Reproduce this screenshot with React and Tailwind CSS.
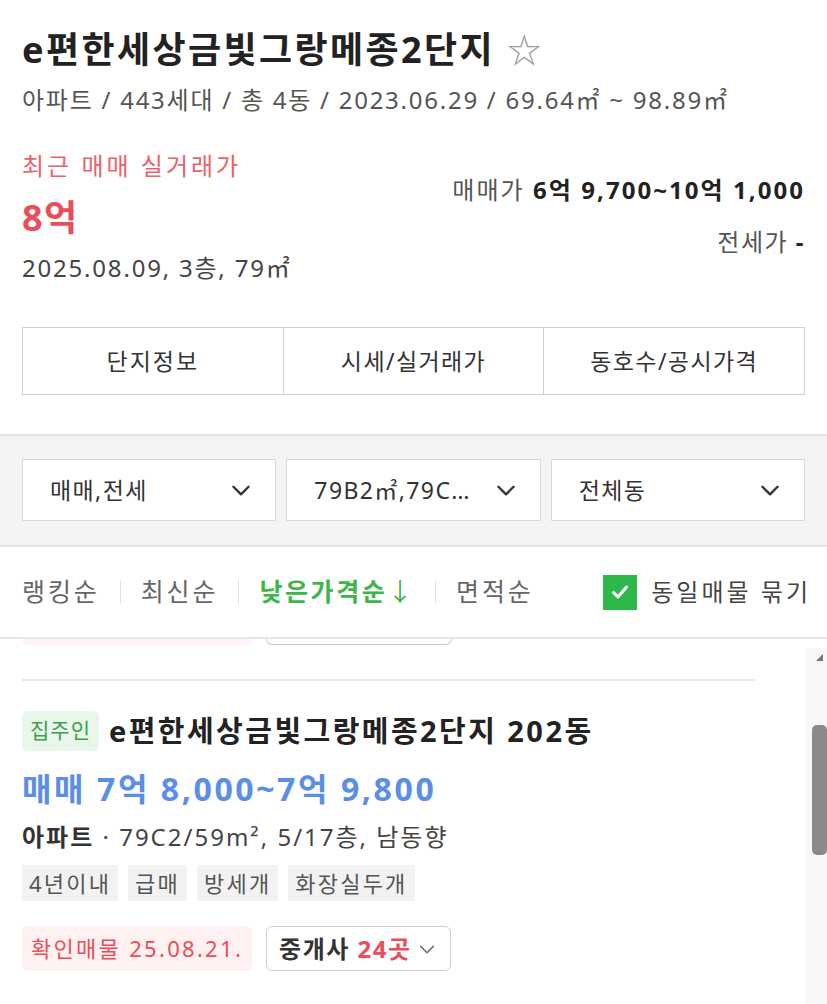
import React from "react";

const F = { fontFamily: '"Noto Sans","Noto Sans CJK KR",sans-serif' };

function Chevron({ className = "", sw = 2 }) {
  return (
    <svg viewBox="0 0 24 24" className={className} fill="none" stroke="currentColor" strokeWidth={sw} strokeLinecap="round" strokeLinejoin="round">
      <path d="M5 9l7 7 7-7" />
    </svg>
  );
}

function Dropdown({ label }) {
  return (
    <div className="flex-1 h-[62px] bg-white border border-[#d9d9d9] flex items-center justify-between pl-[27px] pr-[21px]">
      <span className="text-[23px] text-[#333] tracking-[1.4px] whitespace-nowrap overflow-hidden">{label}</span>
      <Chevron className="w-[26px] h-[26px] text-[#333] shrink-0" sw={2.2} />
    </div>
  );
}

function Sep() {
  return <span className="w-px h-[24px] bg-[#e0e0e0] mx-[20px]" />;
}

export default function App() {
  return (
    <div style={F} className="w-[827px] h-[1004px] bg-white overflow-hidden relative">
      {/* Header */}
      <div className="px-[22px] pt-[26px]">
        <div className="flex items-center h-[48px]">
          <h1 className="text-[36px] font-bold text-[#222] tracking-[2.4px] leading-none">e편한세상금빛그랑메종2단지</h1>
          <span className="ml-[12px] text-[34px] text-[#999] leading-none">☆</span>
        </div>
        <div className="mt-[11px] text-[24px] text-[#555] tracking-[1.75px] leading-[30px] whitespace-nowrap">
          아파트 / 443세대 / 총 4동 / 2023.06.29 / 69.64㎡ ~ 98.89㎡
        </div>

        <div className="flex justify-between mt-[36px]">
          <div>
            <div className="text-[24px] text-[#e9626b] tracking-[3px] leading-[30px]">최근 매매 실거래가</div>
            <div className="text-[36px] font-bold text-[#ea4d57] leading-[44px] mt-[15px] tracking-[1.5px]">8억</div>
            <div className="text-[24px] text-[#444] tracking-[1.8px] leading-[30px] mt-[13px] whitespace-nowrap">2025.08.09, 3층, 79㎡</div>
          </div>
          <div className="flex flex-col items-end pt-[24px]">
            <div className="text-[24px] text-[#555] tracking-[2.05px] leading-[30px] whitespace-nowrap">
              매매가 <span className="font-bold text-[#222]">6억 9,700~10억 1,000</span>
            </div>
            <div className="text-[24px] text-[#555] tracking-[1.5px] leading-[30px] mt-[22px]">
              전세가 <span className="font-bold text-[#222]">-</span>
            </div>
          </div>
        </div>

        <div className="mt-[44px] flex border border-[#cfcfcf] h-[68px]">
          <div className="flex-1 flex items-center justify-center text-[23px] text-[#333] tracking-[2px]">단지정보</div>
          <div className="flex-1 flex items-center justify-center text-[23px] text-[#333] tracking-[1.4px] border-l border-[#cfcfcf]">시세/실거래가</div>
          <div className="flex-1 flex items-center justify-center text-[23px] text-[#333] tracking-[1.4px] border-l border-[#cfcfcf]">동호수/공시가격</div>
        </div>
      </div>

      {/* Filter band */}
      <div className="mt-[39px] bg-[#f4f4f4] border-t-2 border-b-2 border-[#e4e4e4] px-[22px] pt-[23px] pb-[24px] flex gap-[10px]">
        <Dropdown label="매매,전세" />
        <Dropdown label="79B2㎡,79C…" />
        <Dropdown label="전체동" />
      </div>

      {/* Sort bar */}
      <div className="h-[92px] px-[22px] flex items-center border-b-2 border-[#e6e6e6]">
        <span className="text-[25px] text-[#666] tracking-[2.9px]">랭킹순</span>
        <Sep />
        <span className="text-[25px] text-[#666] tracking-[2.9px]">최신순</span>
        <Sep />
        <span className="text-[25px] font-bold text-[#3cb64a] tracking-[2.6px]">낮은가격순<span className="font-normal">↓</span></span>
        <Sep />
        <span className="text-[25px] text-[#666] tracking-[2.9px]">면적순</span>
        <div className="ml-auto flex items-center gap-[14px] mr-[-6px]">
          <span className="w-[34px] h-[35px] bg-[#2fb84a] flex items-center justify-center">
            <svg viewBox="0 0 24 24" className="w-[24px] h-[24px]" fill="none" stroke="white" strokeWidth="3" strokeLinecap="round" strokeLinejoin="round">
              <path d="M5.5 12.5l4.5 4.5L18.5 7" />
            </svg>
          </span>
          <span className="text-[24px] text-[#444] tracking-[3px] whitespace-nowrap">동일매물 묶기</span>
        </div>
      </div>

      {/* List area */}
      <div className="relative">
        <div className="pr-[49px]">
          {/* cut-off previous item bottoms */}
          <div className="flex gap-[14px] px-[22px] h-[7px]">
            <div className="w-[230px] h-[6px] bg-[#fff3f3] rounded-b-[6px]" />
            <div className="w-[186px] h-[6px] border-b border-l border-r border-[#ccc] rounded-b-[6px]" />
          </div>
          <div className="mx-[22px] mt-[33px] border-t-2 border-[#e8e8e8]" />

          <div className="px-[22px] pt-[30px]">
            <div className="flex items-center h-[40px]">
              <span className="h-[40px] px-[8px] bg-[#e9f6eb] rounded-[6px] text-[21px] text-[#3f9e4e] flex items-center tracking-[1px]">집주인</span>
              <span className="ml-[10px] text-[29px] font-bold text-[#222] tracking-[2.45px] whitespace-nowrap">e편한세상금빛그랑메종2단지 202동</span>
            </div>
            <div className="mt-[18px] text-[32px] font-bold text-[#5a8ee8] tracking-[2.6px] leading-[40px] whitespace-nowrap">
              매매 7억 8,000~7억 9,800
            </div>
            <div className="mt-[13px] text-[24px] text-[#444] tracking-[2px] leading-[30px] whitespace-nowrap">
              <span className="font-bold text-[#333]">아파트</span> · 79C2/59m², 5/17층, 남동향
            </div>
            <div className="mt-[13px] flex gap-[10px]">
              {["4년이내", "급매", "방세개", "화장실두개"].map((t) => (
                <span key={t} className="h-[36px] px-[7px] bg-[#f2f2f2] text-[22px] text-[#555] tracking-[2.2px] flex items-center">{t}</span>
              ))}
            </div>
            <div className="mt-[25px] flex gap-[14px]">
              <span className="h-[45px] px-[9px] bg-[#fff1f1] rounded-[6px] text-[22px] text-[#ea4d57] tracking-[2.3px] flex items-center whitespace-nowrap">확인매물 25.08.21.</span>
              <span className="h-[45px] px-[12px] border border-[#cfcfcf] rounded-[6px] text-[24px] text-[#333] tracking-[1.5px] flex items-center font-bold whitespace-nowrap">
                중개사&nbsp;<span className="text-[#ea4d57]">24곳</span>
                <Chevron className="w-[22px] h-[22px] ml-[4px] text-[#666]" sw={1.6} />
              </span>
            </div>
          </div>
        </div>

        {/* scrollbar */}
        <div className="absolute top-[9px] right-0 w-[22px] h-[400px] bg-[#f7f7f7]">
          <svg viewBox="0 0 10 10" className="absolute top-[4px] right-[2px] w-[12px] h-[10px]">
            <path d="M2 9L9 2V9Z" fill="#777" />
          </svg>
          <div className="absolute top-[77px] right-0 w-[15px] h-[130px] bg-[#8a8a8a] rounded-[5px]" />
        </div>
      </div>
    </div>
  );
}
